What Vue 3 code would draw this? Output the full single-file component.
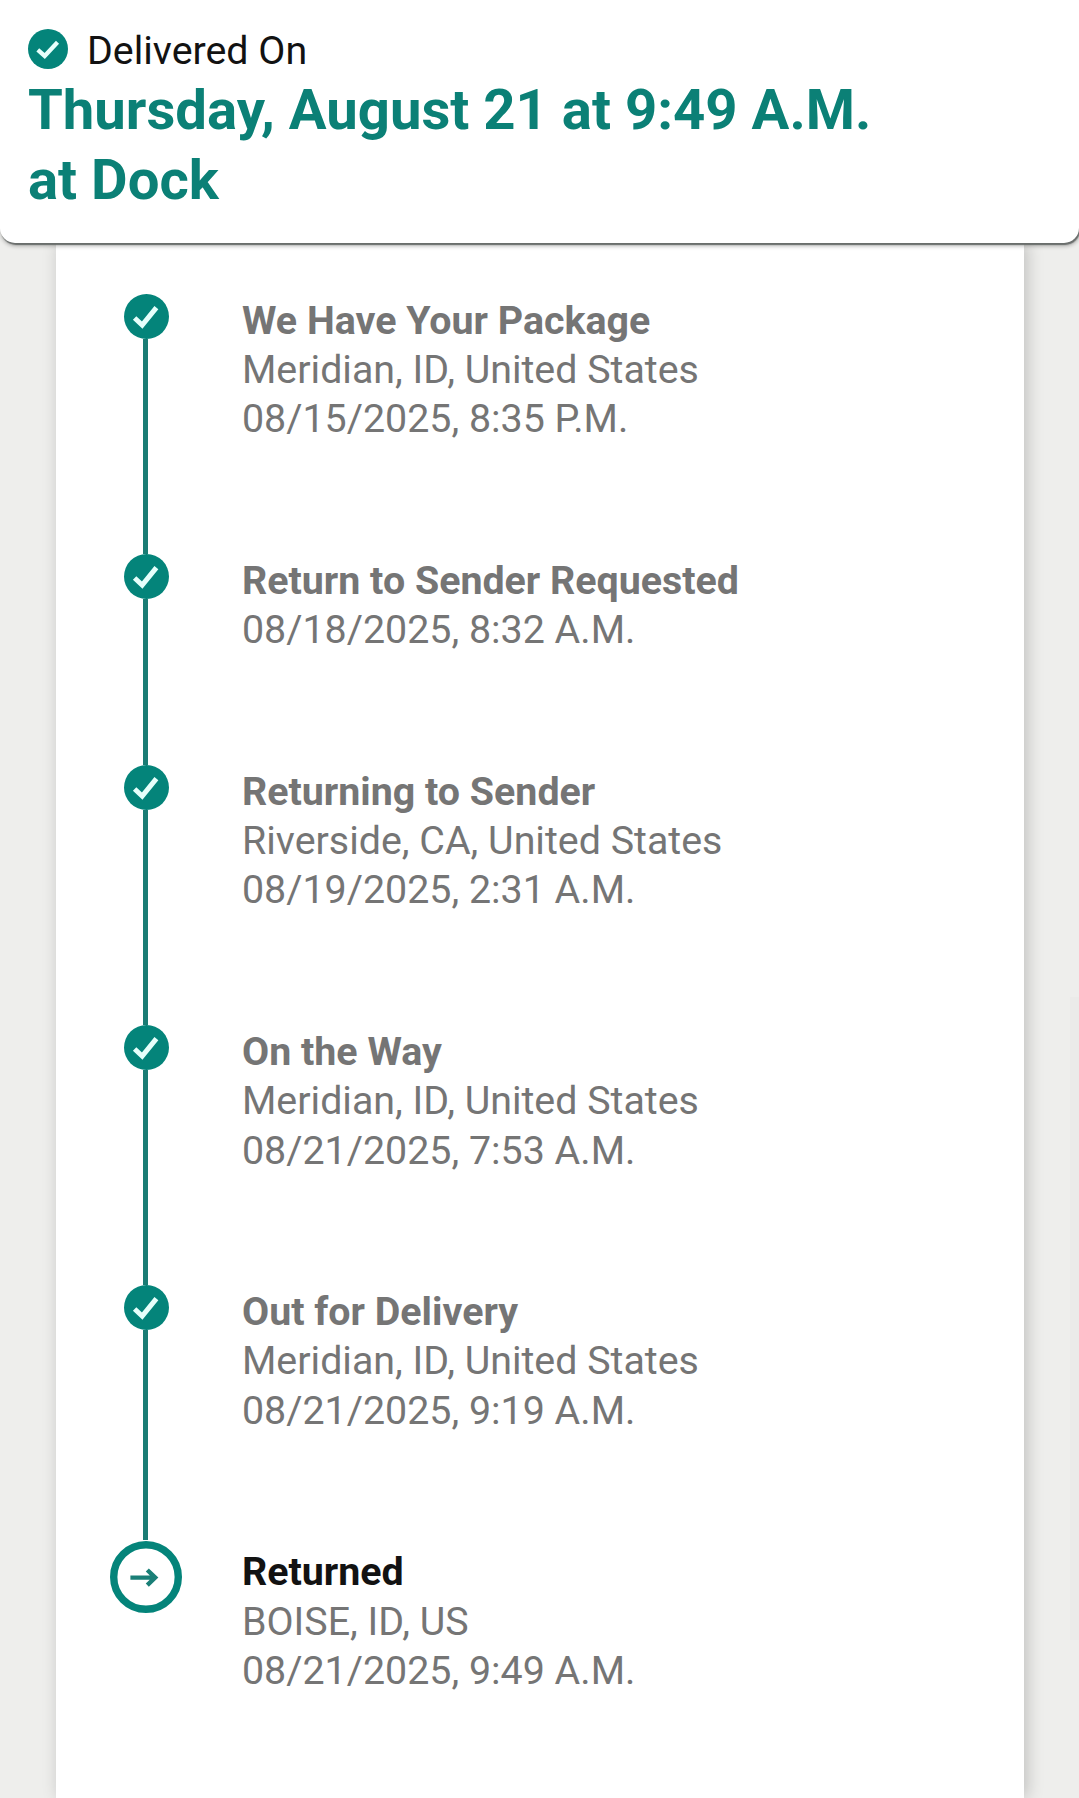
<script setup>
const steps = [
  { title: 'We Have Your Package', lines: ['Meridian, ID, United States', '08/15/2025, 8:35 P.M.'] },
  { title: 'Return to Sender Requested', lines: ['08/18/2025, 8:32 A.M.'] },
  { title: 'Returning to Sender', lines: ['Riverside, CA, United States', '08/19/2025, 2:31 A.M.'] },
  { title: 'On the Way', lines: ['Meridian, ID, United States', '08/21/2025, 7:53 A.M.'] },
  { title: 'Out for Delivery', lines: ['Meridian, ID, United States', '08/21/2025, 9:19 A.M.'] },
  { title: 'Returned', lines: ['BOISE, ID, US', '08/21/2025, 9:49 A.M.'], current: true },
]
</script>

<template>
  <div class="page">
    <header class="summary">
      <div class="status">
        <svg class="status-icon" viewBox="0 0 45 45" aria-hidden="true">
          <circle cx="22.5" cy="22.5" r="22.5" fill="#04847a" />
          <path d="M11 23.5 L18.8 30.3 L33.2 15" fill="none" stroke="#e6fffb" stroke-width="4.8" />
        </svg>
        <span>Delivered On</span>
      </div>
      <h1 class="headline">Thursday, August 21 at 9:49 A.M.<br />at Dock</h1>
    </header>

    <main class="card">
      <ol class="timeline">
        <li v-for="step in steps" :key="step.title" class="step" :class="{ current: step.current }">
          <div class="marker">
            <template v-if="!step.current">
              <svg class="check" viewBox="0 0 45 45" aria-hidden="true">
                <circle cx="22.5" cy="22.5" r="22.5" fill="#04847a" />
                <path d="M10.6 24 L18.2 31 L32.4 13.6" fill="none" stroke="#e6fffb" stroke-width="5" />
              </svg>
              <span class="line"></span>
            </template>
            <svg v-else class="ring" viewBox="0 0 72 72" aria-hidden="true">
              <circle cx="36" cy="36" r="32.3" fill="#fff" stroke="#04847a" stroke-width="7.4" />
              <path d="M20.4 36.6 H45 M37.3 29 L45.2 36.6 L37.3 44.2" fill="none" stroke="#1a7f77" stroke-width="4.4" />
            </svg>
          </div>
          <div class="details">
            <h2>{{ step.title }}</h2>
            <p v-for="line in step.lines" :key="line">{{ line }}</p>
          </div>
        </li>
      </ol>
    </main>
    <div class="scrollbar"></div>
  </div>
</template>

<style>
body {
  margin: 0;
  background: #eeeeec;
}
</style>

<style scoped>
.page {
  position: relative;
  display: flex;
  flex-direction: column;
  height: 1798px;
  overflow: hidden;
  background: #eeeeec;
  font-family: Roboto, sans-serif;
  font-size: 39.375px;
  line-height: 49.2px;
  color: #121212;
}
.summary {
  position: relative;
  z-index: 1;
  box-sizing: border-box;
  flex: none;
  height: 243px;
  padding: 25.5px 28px 0;
  background: #fff;
  border-radius: 0 0 15px 15px;
  box-shadow: 1px 2px 1px #6a6e6c, 1px 3px 4px rgba(0, 0, 0, 0.3);
}
.status {
  display: flex;
  align-items: center;
  gap: 19px;
}
.status-icon {
  width: 40px;
  height: 40px;
  margin-top: -2px;
}
.headline {
  margin: 1px 0 0;
  font-size: 56.25px;
  font-weight: 700;
  line-height: 69.8px;
  color: #0b8076;
}
.card {
  flex: 1;
  box-sizing: border-box;
  width: 968px;
  margin-left: 56px;
  padding: 51px 0 0 54px;
  background: #fff;
  box-shadow: 3px 0 16px rgba(0, 0, 0, 0.2);
}
.timeline {
  margin: 0;
  padding: 0;
  list-style: none;
}
.step {
  display: flex;
  gap: 60px;
  color: #757575;
}
.marker {
  flex: none;
  display: flex;
  flex-direction: column;
  align-items: center;
  width: 72px;
}
.check {
  flex: none;
  width: 45px;
  height: 45px;
}
.line {
  flex: 1;
  width: 5px;
  margin: 0 1px 0 0;
  background: #1a7c74;
}
.step:nth-last-child(2) .line {
  margin-bottom: 5px;
}
.ring {
  width: 72px;
  height: 72px;
  margin-top: -4.5px;
}
.details {
  padding: 2px 0 110.5px;
}
.current .details {
  padding-bottom: 0;
}
h2,
p {
  margin: 0;
  font-size: inherit;
  font-weight: 400;
  line-height: inherit;
}
h2 {
  font-weight: 700;
}
.current h2 {
  color: #121212;
}
.scrollbar {
  position: absolute;
  top: 997px;
  right: 0;
  width: 9px;
  height: 643px;
  background: #ebebe9;
}
</style>
